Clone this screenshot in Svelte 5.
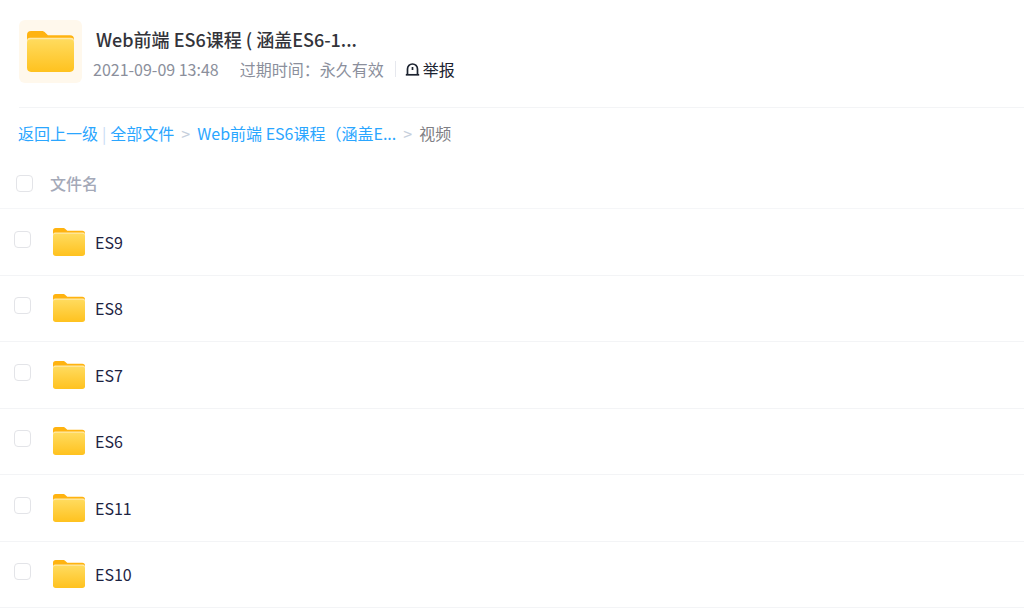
<script>
	const folders = ['ES9', 'ES8', 'ES7', 'ES6', 'ES11', 'ES10'];
</script>

{#snippet folder(w, h, id)}
	<svg class="folder" width={w} height={h} viewBox="0 0 46 40">
		<defs>
			<linearGradient id={id} x1="0" y1="0" x2="0" y2="1">
				<stop offset="0" stop-color="#ffdb5e" />
				<stop offset="1" stop-color="#ffc21f" />
			</linearGradient>
		</defs>
		<path d="M4 0h10c2 0 3 .6 4.200 1.800L20.500 4H42a4 4 0 0 1 4 4v8H0V4a4 4 0 0 1 4-4z" fill="#ffb310" />
		<path d="M3 6.500h40a3 3 0 0 1 3 3V12H0V9.500a3 3 0 0 1 3-3z" fill="#ffe9a6" />
		<path d="M4 8h38a4 4 0 0 1 4 4v24a4 4 0 0 1-4 4H4a4 4 0 0 1-4-4V12a4 4 0 0 1 4-4z" fill="url(#{id})" />
	</svg>
{/snippet}

<div class="page">
	<header class="head">
		<div class="tile">{@render folder(47, 41, 'big')}</div>
		<div class="info">
			<h1>Web前端 ES6课程 ( 涵盖ES6-1...</h1>
			<div class="meta">
				<span class="date">2021-09-09 13:48</span>
				<span class="expire">过期时间：永久有效</span>
				<span class="report">
					<svg width="15" height="15" viewBox="0 0 15 15" fill="none" stroke="#1c2330" stroke-width="1.7">
						<path d="M2.500 12.500V7a5 5 0 0 1 10 0v5.500" />
						<path d="M.8 12.800h13.400" />
						<path d="M7.500 5v3" />
					</svg>
					举报
				</span>
			</div>
		</div>
	</header>

	<nav class="crumbs">
		<a href="#back">返回上一级</a>
		<span class="bar">|</span>
		<a href="#all">全部文件</a>
		<span class="sep">&gt;</span>
		<a href="#course">Web前端 ES6课程（涵盖E...</a>
		<span class="sep">&gt;</span>
		<span class="current">视频</span>
	</nav>

	<div class="thead">
		<span class="check"></span>
		<span class="label">文件名</span>
	</div>

	{#each folders as name, i}
		<div class="row">
			<span class="check"></span>
			{@render folder(32, 28, 'f' + i)}
			<span class="name">{name}</span>
		</div>
	{/each}
</div>

<style>
	:global(body) {
		background: #fff;
		overflow: hidden;
	}

	.page {
		width: 1024px;
		height: 608px;
		overflow: hidden;
		font-family: 'Noto Sans CJK SC', sans-serif;
	}

	.head {
		display: flex;
		gap: 11px;
		height: 87px;
		margin-left: 19px;
		padding-top: 20px;
		border-bottom: 1px solid #f3f4f6;
	}

	.tile {
		display: flex;
		align-items: center;
		justify-content: center;
		width: 63px;
		height: 63px;
		border-radius: 6px;
		background: #fff8ec;
	}

	.folder {
		display: block;
		flex: none;
	}

	.info {
		padding-top: 6px;
	}

	h1 {
		margin: 0 0 0 3px;
		font-size: 18px;
		line-height: 26px;
		font-weight: 500;
		color: #33343a;
		white-space: nowrap;
	}

	.meta {
		display: flex;
		align-items: center;
		margin-top: 7px;
		font-size: 16px;
		line-height: 20px;
		color: #8b8f9c;
		white-space: nowrap;
	}

	.expire {
		margin-left: 21px;
		padding-right: 11px;
	}

	.report {
		display: flex;
		align-items: center;
		gap: 3px;
		padding-left: 9px;
		color: #1c2330;
		border-left: 1px solid #e6e8ee;
		line-height: 16px;
	}

	.crumbs {
		display: flex;
		align-items: center;
		height: 50px;
		margin-left: 18px;
		font-size: 16px;
		color: #8b8f9c;
		white-space: nowrap;
	}

	.crumbs a {
		color: #2aa6ff;
		text-decoration: none;
	}

	.bar {
		margin: 0 4px;
		color: #c8dcf5;
	}

	.sep {
		margin: 0 7px;
		color: #c6cfdc;
	}

	.current {
		color: #7f7f85;
	}

	.thead {
		display: flex;
		align-items: center;
		gap: 17px;
		height: 51px;
		padding-left: 16px;
		border-bottom: 1px solid #f5f6f8;
		box-sizing: border-box;
	}

	.label {
		font-size: 16px;
		font-weight: 500;
		color: #a4a9b8;
	}

	.check {
		display: block;
		flex: none;
		width: 15px;
		height: 15px;
		border: 1.5px solid #e3e4e8;
		border-radius: 4px;
	}

	.row {
		display: flex;
		align-items: center;
		height: 66.5px;
		padding-left: 14px;
		border-bottom: 1px solid #f3f4f6;
		box-sizing: border-box;
	}

	.row .check {
		margin: -5px 22px 0 0;
	}

	.name {
		margin-left: 10px;
		font-size: 16px;
		color: #1d2342;
	}
</style>
